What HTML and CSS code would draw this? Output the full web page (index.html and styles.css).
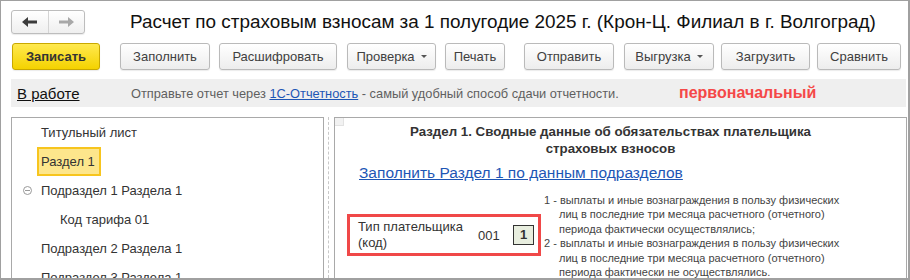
FILE: index.html
```html
<!DOCTYPE html>
<html lang="ru">
<head>
<meta charset="utf-8">
<link rel="stylesheet" href="styles.css">
</head>
<body>
<div class="window">
  <div class="topbar">
    <div class="nav">
      <span class="nav-btn">
        <svg width="16" height="10" viewBox="0 0 16 10"><path d="M0 5 L6 0 L6 3.5 L15 3.5 L15 6.5 L6 6.5 L6 10 Z" fill="#3c3c3c"/></svg>
      </span>
      <span class="nav-btn">
        <svg width="16" height="10" viewBox="0 0 16 10"><path d="M16 5 L10 0 L10 3.5 L1 3.5 L1 6.5 L10 6.5 L10 10 Z" fill="#a8a8a8"/></svg>
      </span>
    </div>
    <h1 class="title">Расчет по страховым взносам за 1 полугодие 2025 г. (Крон-Ц. Филиал в г. Волгоград)</h1>
  </div>

  <div class="toolbar">
    <button class="btn btn-primary">Записать</button>
    <button class="btn w-fill">Заполнить</button>
    <button class="btn w-decode">Расшифровать</button>
    <button class="btn w-check">Проверка <span class="caret"></span></button>
    <button class="btn w-print">Печать</button>
    <button class="btn w-send">Отправить</button>
    <button class="btn w-export">Выгрузка <span class="caret"></span></button>
    <button class="btn w-load">Загрузить</button>
    <button class="btn w-compare">Сравнить</button>
  </div>

  <div class="statusbar">
    <a class="state">В работе</a>
    <span class="hint">Отправьте отчет через <a class="hint-link">1С-Отчетность</a> - самый удобный способ сдачи отчетности.</span>
    <span class="kind">первоначальный</span>
  </div>

  <div class="panels">
    <div class="tree">
      <div class="tree-row">Титульный лист</div>
      <div class="tree-row"><span class="selected">Раздел 1</span></div>
      <div class="tree-row"><span class="toggle"></span>Подраздел 1 Раздела 1</div>
      <div class="tree-row sub">Код тарифа 01</div>
      <div class="tree-row">Подраздел 2 Раздела 1</div>
      <div class="tree-row">Подраздел 3 Раздела 1</div>
    </div>
    <div class="splitter"></div>
    <div class="sheet">
      <span class="corner"></span>
      <div class="sheet-title">Раздел 1. Сводные данные об обязательствах плательщика<br>страховых взносов</div>
      <a class="fill-link">Заполнить Раздел 1 по данным подразделов</a>
      <div class="payer">
        <div class="payer-box">
          <span class="payer-label">Тип плательщика (код)</span>
          <span class="payer-code">001</span>
          <span class="payer-value">1</span>
        </div>
        <div class="payer-notes">
          <div class="note">1 - выплаты и иные вознаграждения в пользу физических<br>лиц в последние три месяца расчетного (отчетного)<br>периода фактически осуществлялись;</div>
          <div class="note">2 - выплаты и иные вознаграждения в пользу физических<br>лиц в последние три месяца расчетного (отчетного)<br>периода фактически не осуществлялись.</div>
        </div>
      </div>
    </div>
  </div>
</div>
</body>
</html>
```

FILE: styles.css
```css
* { box-sizing: border-box; }

html, body {
  margin: 0;
  padding: 0;
  background: #fff;
}

body {
  width: 910px;
  height: 280px;
  overflow: hidden;
  font-family: "Liberation Sans", Arial, sans-serif;
  color: #333;
}

.window {
  width: 910px;
  height: 280px;
  border: 1px solid #a0a0a0;
  border-right-width: 2px;
  border-bottom-width: 2px;
  padding: 9px 0 0 10px;
  display: flex;
  flex-direction: column;
  overflow: hidden;
}

/* top bar */
.topbar {
  display: flex;
  align-items: center;
  height: 24px;
}

.nav {
  flex-shrink: 0;
  display: flex;
  width: 74px;
  height: 24px;
  border: 1px solid #bdbdbd;
  border-radius: 3px;
  background: linear-gradient(#ffffff, #efefef);
  box-shadow: 0 1px 1px rgba(0,0,0,0.08);
}

.nav-btn {
  flex: 1;
  display: flex;
  align-items: center;
  justify-content: center;
}

.nav-btn + .nav-btn {
  border-left: 1px solid #d4d4d4;
}

.title {
  margin: 0 0 0 45px;
  font-size: 18.9px;
  font-weight: normal;
  color: #111;
  white-space: nowrap;
  line-height: 24px;
}

/* toolbar */
.toolbar {
  display: flex;
  margin-top: 9px;
  height: 27px;
}

.btn {
  flex-shrink: 0;
  height: 27px;
  padding: 0;
  border: 1px solid #bababa;
  border-radius: 3px;
  background: linear-gradient(#ffffff, #ededed);
  box-shadow: 0 1px 1px rgba(0,0,0,0.08);
  font-family: "Liberation Sans", Arial, sans-serif;
  font-size: 13px;
  color: #404040;
  display: flex;
  align-items: center;
  justify-content: center;
  margin-left: 10px;
}

.btn-primary {
  width: 88px;
  margin-left: 1px;
  font-weight: bold;
  color: #333;
  border-color: #c9a800;
  background: linear-gradient(#ffe94f, #f4d200);
}

.w-fill { width: 90px; margin-left: 20px; }
.w-decode { width: 118px; margin-left: 9px; }
.w-check { width: 89px; margin-left: 10px; }
.w-print { width: 60px; margin-left: 9px; }
.w-send { width: 90px; margin-left: 19px; }
.w-export { width: 90px; margin-left: 10px; }
.w-load { width: 89px; margin-left: 7px; }
.w-compare { width: 84px; margin-left: 7px; }

.caret {
  display: inline-block;
  width: 0;
  height: 0;
  margin-left: 6px;
  border-left: 3px solid transparent;
  border-right: 3px solid transparent;
  border-top: 3px solid #555;
}

/* status bar */
.statusbar {
  margin-top: 9px;
  margin-right: 2px;
  height: 28px;
  background: #efefef;
  display: flex;
  align-items: center;
  padding-left: 6px;
}

.state {
  font-size: 15px;
  color: #111;
  text-decoration: underline;
  width: 114px;
}

.hint {
  font-size: 12.8px;
  color: #5f5f5f;
  width: 548px;
  white-space: nowrap;
}

.hint-link {
  color: #1d56b5;
  text-decoration: underline;
}

.kind {
  font-size: 16px;
  font-weight: bold;
  color: #f54848;
}

/* panels */
.panels {
  flex: 1;
  display: flex;
  margin-top: 10px;
  min-height: 0;
}

.tree {
  flex-shrink: 0;
  width: 313px;
  border: 1px solid #a9a9a9;
  border-bottom: none;
  font-size: 13px;
  color: #333;
}

.tree-row {
  height: 29px;
  line-height: 29px;
  padding-left: 29px;
  position: relative;
  white-space: nowrap;
}

.tree-row.sub {
  padding-left: 48px;
}

.selected {
  display: inline-block;
  height: 29px;
  line-height: 25px;
  margin-left: -4px;
  padding: 0 4px 0 2px;
  background: #fde68c;
  border: 2px solid #f7c51e;
}

.toggle {
  position: absolute;
  left: 11px;
  top: 10px;
  width: 9px;
  height: 9px;
  border: 1px solid #9a9a9a;
  border-radius: 50%;
}

.toggle::after {
  content: "";
  position: absolute;
  left: 1px;
  right: 1px;
  top: 3px;
  height: 1px;
  background: #9a9a9a;
}

.splitter {
  flex-shrink: 0;
  width: 10px;
  display: flex;
  justify-content: center;
}

.splitter::before {
  content: "";
  width: 0;
  border-left: 1px dashed #c8c8c8;
  margin-left: -1px;
}

.sheet {
  flex: 1;
  margin-right: 1px;
  border: 1px solid #a9a9a9;
  border-bottom: none;
  position: relative;
}

.corner {
  position: absolute;
  left: 0;
  top: 0;
  width: 9px;
  height: 8px;
  background: #f2f2f2;
  border-right: 1px solid #e2e2e2;
  border-bottom: 1px solid #e2e2e2;
}

.sheet-title {
  padding: 5px 20px 0 0;
  text-align: center;
  font-size: 13.3px;
  font-weight: bold;
  line-height: 17px;
  color: #333;
}

.fill-link {
  display: block;
  margin: 6px 0 0 24px;
  font-size: 15.5px;
  line-height: 20px;
  color: #1d56b5;
  text-decoration: underline;
}

.payer {
  display: flex;
  margin: 10px 0 0 12px;
}

.payer-box {
  flex-shrink: 0;
  margin-top: 21px;
  width: 194px;
  height: 42px;
  border: 3px solid #f04848;
  display: flex;
  align-items: center;
  padding-left: 8px;
  font-size: 13px;
  color: #333;
}

.payer-label {
  width: 120px;
  line-height: 16px;
}

.payer-code {
  width: 35px;
}

.payer-value {
  width: 21px;
  height: 20px;
  border: 1px solid #333;
  background: #e8eedf;
  font-weight: bold;
  text-align: center;
  line-height: 18px;
}

.payer-notes {
  margin-left: 3px;
  font-size: 11px;
  line-height: 14.4px;
  color: #444;
  white-space: nowrap;
}

.note {
  padding-left: 15px;
  text-indent: -15px;
}
```
